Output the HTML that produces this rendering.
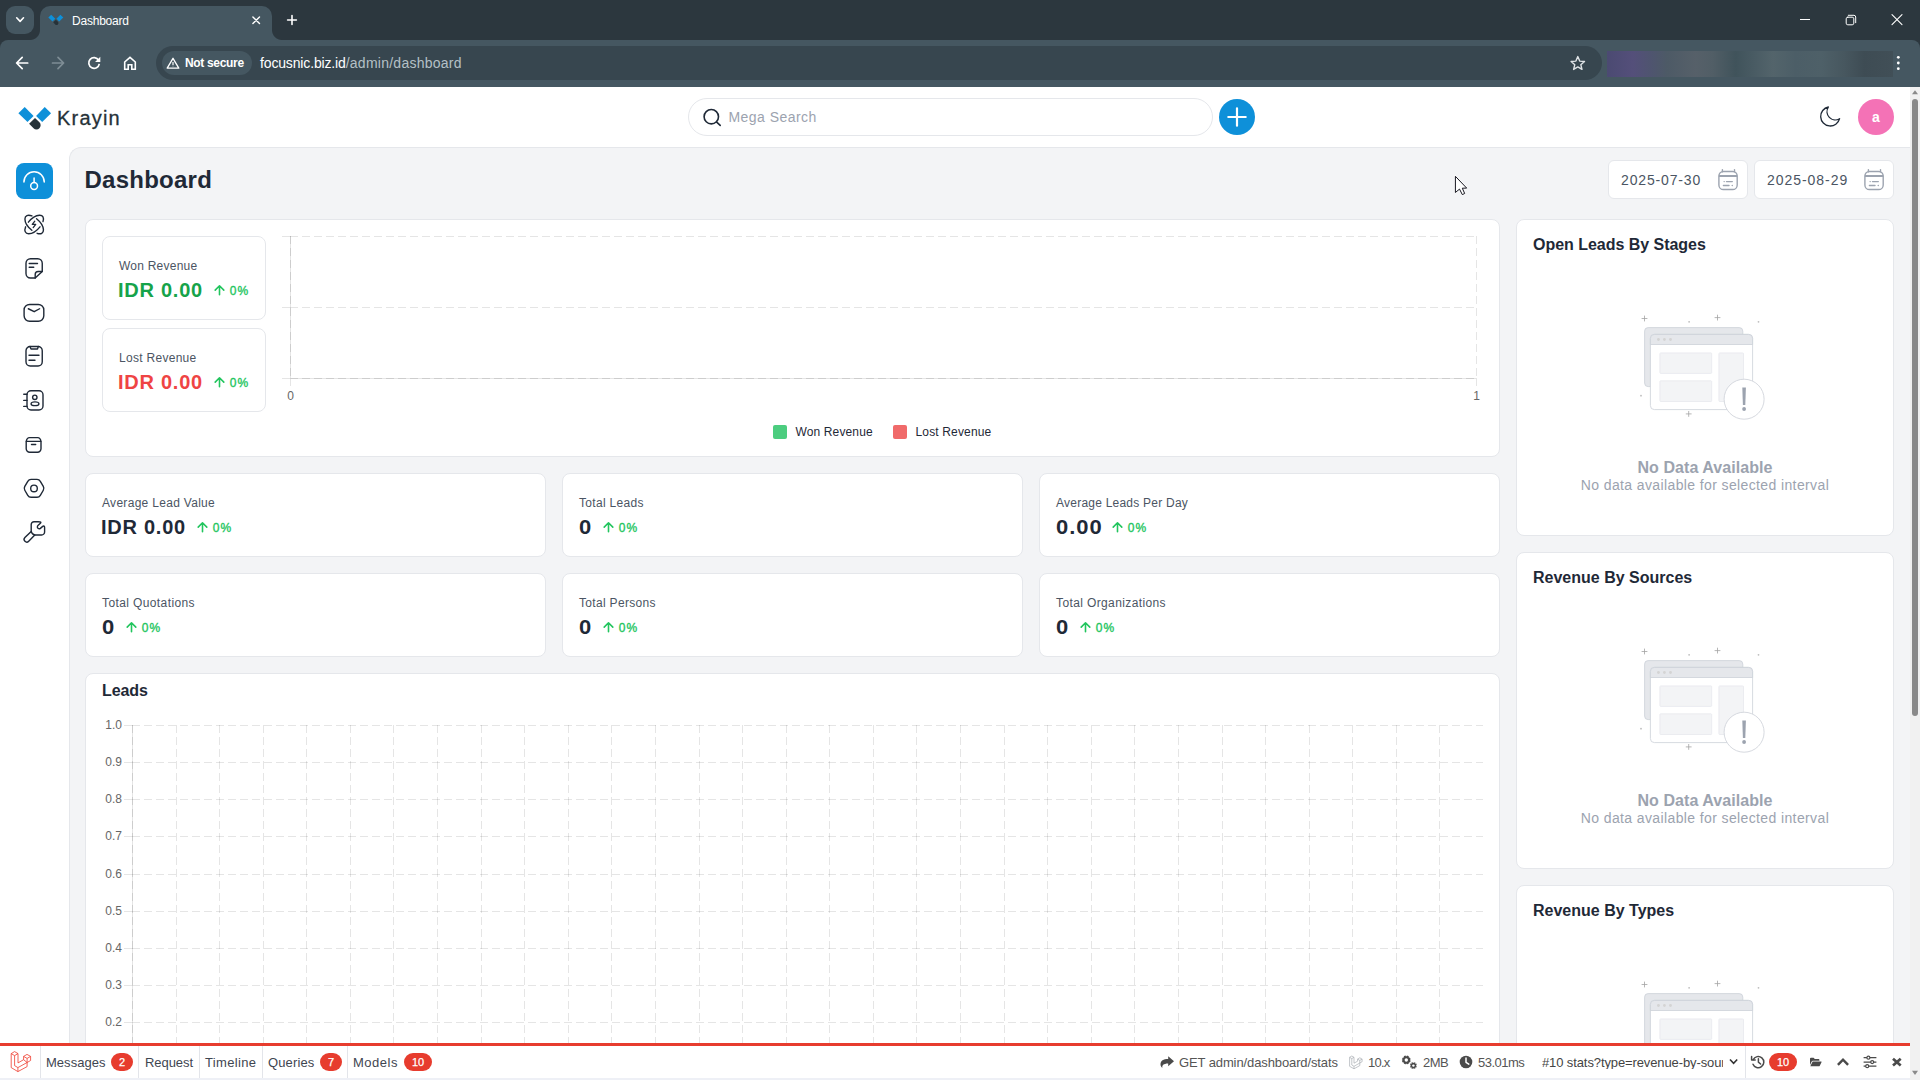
<!DOCTYPE html>
<html lang="en">
<head>
<meta charset="utf-8">
<title>Dashboard</title>
<style>
*{box-sizing:border-box;margin:0;padding:0}
html,body{width:1920px;height:1080px;overflow:hidden;background:#fff}
body{position:relative;font-family:"Liberation Sans",sans-serif;color:#1f2937}
.abs,.t{position:absolute}
.t{white-space:nowrap;line-height:1}
svg{position:absolute;overflow:visible}

/* ---------- browser chrome ---------- */
#tabstrip{position:absolute;left:0;top:0;width:1920px;height:52px;background:#2c373e}
#tabsearch{position:absolute;left:6px;top:6px;width:28px;height:28px;border-radius:9px;background:#455761}
#tab{position:absolute;left:40px;top:6px;width:232px;height:34px;border-radius:10px 10px 0 0;background:#455761}
#tab:before,#tab:after{content:"";position:absolute;bottom:0;width:10px;height:10px;background:radial-gradient(circle at 0 0,rgba(0,0,0,0) 9.5px,#455761 10.5px)}
#tab:before{left:-10px}
#tab:after{right:-10px;background:radial-gradient(circle at 100% 0,rgba(0,0,0,0) 9.5px,#455761 10.5px)}
#toolbar{position:absolute;left:0;top:40px;width:1920px;height:47px;background:#455761;border-radius:8px 8px 0 0}
#omnibox{position:absolute;left:156px;top:6px;width:1446px;height:34px;border-radius:17px;background:#37464f}
#chip{position:absolute;left:6px;top:5px;width:90px;height:24px;border-radius:12px;background:#455761}
#ext{position:absolute;left:1607px;top:11px;width:286px;height:26px;background:linear-gradient(90deg,#4b4a72 0,#544f7a 9%,#4f5470 15%,#4d5a66 21%,#566069 31%,#515e66 37%,#40535b 45%,#4a5c64 52%,#53646b 58%,#4c5e67 66%,#4e6068 75%,#47575f 83%,#3e4c54 90%,#414f57 100%)}

/* ---------- app ---------- */
#hdr{position:absolute;left:0;top:87px;width:1910px;height:60px;background:#fff}
#search{position:absolute;left:688px;top:11px;width:525px;height:38px;border:1px solid #e5e7eb;border-radius:19px;background:#fff}
#plus{position:absolute;left:1219px;top:12px;width:36px;height:36px;border-radius:50%;background:#0e90d9}
#avatar{position:absolute;left:1858px;top:12px;width:36px;height:36px;border-radius:50%;background:#f472b6}
#side{position:absolute;left:0;top:147px;width:69px;height:900px;background:#fff}
.nav{position:absolute;left:16px;width:37px;height:36px;border-radius:8px}
.nav.on{background:#0e90d9}
#main{position:absolute;left:69px;top:147px;width:1841px;height:900px;background:#f3f4f6;border:1px solid #e5e7eb;border-right:0;border-bottom:0;border-top-left-radius:12px;overflow:hidden}
/* children of #main are positioned in page coordinates via this wrapper */
#pg{position:absolute;left:-70px;top:-148px;width:1920px;height:1080px}
.card{position:absolute;background:#fff;border:1px solid #e5e7eb;border-radius:8px}
.lbl{font-size:12px;color:#4b5563;letter-spacing:.22px}
.val{font-size:20px;font-weight:700;color:#1f2937;letter-spacing:.75px}
.val.z{transform:scaleX(1.1);transform-origin:0 0;letter-spacing:.9px}
.pct{font-size:12px;font-weight:400;color:#22c55e;letter-spacing:1.1px;margin-left:.7px;-webkit-text-stroke:.35px #22c55e}
.h2{font-size:16px;font-weight:700;color:#1f2937}
.nd1{font-size:16px;font-weight:700;color:#9ca3af}
.nd2{font-size:14px;color:#9ca3af}
.ax{font-size:12px;color:#666}
.date{position:absolute;top:160px;width:140px;height:39px;background:#fff;border:1px solid #e5e7eb;border-radius:6px}

/* ---------- debugbar ---------- */
#dbg{position:absolute;left:0;top:1043px;width:1910px;height:37px;background:#fff;border-top:3px solid #e73c2e;border-bottom:2px solid #eef0f6;font-size:13px;color:#3f4651}
#dbg .sep{position:absolute;top:0;width:1px;height:32px;background:#e3e5ea}
.bdg{position:absolute;top:7px;height:18px;border-radius:9px;background:#e73c2e;color:#fff;font-size:11px;font-weight:400;-webkit-text-stroke:.25px #fff;line-height:18px;text-align:center}

/* ---------- scrollbar ---------- */
#sb{position:absolute;left:1910px;top:87px;width:10px;height:993px;background:#f1f1f1}
#sb i{position:absolute;left:2px;top:12px;width:6px;height:617px;border-radius:3px;background:#8a8a8a}
</style>
</head>
<body>

<!-- ================= BROWSER CHROME ================= -->
<div id="tabstrip">
  <div id="tabsearch"></div>
  <div id="tab"></div>
</div>
<div id="toolbar">
  <div id="omnibox"><div id="chip"></div></div>
  <div id="ext"></div>
</div>
<svg style="left:0;top:0" width="1920" height="87" viewBox="0 0 1920 87" fill="none" stroke="#fff" stroke-width="1.6" stroke-linecap="round" stroke-linejoin="round">
  <path d="M16.7 17.8L20.1 21.4L23.5 17.8"/>
  <g stroke="none"><path d="M51.2 14.7L48.3 17.6L52.5 21.6L55.3 18.8Z" fill="#0e90d9"/><path d="M60.4 14.7L63.3 17.6L59.2 21.6L56.4 18.8Z" fill="#0e90d9"/><path d="M55.9 19.7L53.2 22.3L55.2 24.4A1.9 1.9 0 0 0 57.9 21.7Z" fill="#263238"/></g>
  <path d="M252.9 16.9L259.5 23.5M259.5 16.9L252.9 23.5" stroke-width="1.4"/>
  <path d="M287.6 20H296.4M292 15.6V24.4"/>
  <path d="M1800 19.5H1810" stroke-width="1" stroke-linecap="butt"/>
  <rect x="1846.2" y="17.2" width="7.6" height="7.6" rx="1.6" stroke-width="1"/><path d="M1848.3 15.3H1854A1.8 1.8 0 0 1 1855.7 17V22.7" stroke-width="1"/>
  <path d="M1892 14.7L1902 24.7M1902 14.7L1892 24.7" stroke-width="1.1"/>
  <path d="M27.7 63H17M22.2 57.4L16.6 63L22.2 68.6" stroke-width="1.7"/>
  <path d="M52.5 63H63.2M58 57.4L63.6 63L58 68.6" stroke-width="1.7" stroke="#7e8d95"/>
  <path d="M98.6 60.2A5.3 5.3 0 1 0 99.3 63.8" stroke-width="1.7" stroke-linecap="butt"/><path d="M100.3 56.8V62H95.1Z" fill="#fff" stroke="none"/>
  <path d="M124.7 69.2V62L130 57.3L135.3 62V69.2H131.8V64.8H128.2V69.2Z" stroke-width="1.6" stroke-linejoin="miter"/>
  <path d="M173 58.3L167.2 68.2H178.8Z" stroke-width="1.3"/><path d="M173 62V65.2M173 66.8V66.9" stroke-width="1.2" stroke-linecap="butt"/>
  <path d="M1577.8 56.6L1579.7 61.1L1584.5 61.5L1580.8 64.7L1582 69.4L1577.8 66.9L1573.6 69.4L1574.8 64.7L1571.1 61.5L1575.9 61.1Z" stroke="#dfe3e6" stroke-width="1.4"/>
  <g fill="#fff" stroke="none"><circle cx="1898.3" cy="57.3" r="1.4"/><circle cx="1898.3" cy="63" r="1.4"/><circle cx="1898.3" cy="68.7" r="1.4"/></g>
</svg>
<span class="t" style="left:72px;top:15px;font-size:12px;color:#fff;letter-spacing:-.22px">Dashboard</span>
<span class="t" style="left:185px;top:57px;font-size:12px;font-weight:700;color:#fff;letter-spacing:-.33px">Not secure</span>
<span class="t" style="left:260px;top:56px;font-size:14px;color:#fff;letter-spacing:-.15px">focusnic.biz.id<span style="color:#b4c0c6;letter-spacing:.25px">/admin/dashboard</span></span>

<!-- ================= APP HEADER ================= -->
<div id="hdr">
  <div id="search"></div>
  <div id="plus"></div>
  <div id="avatar"></div>
  <svg style="left:0;top:0" width="130" height="60" viewBox="0 0 130 60"><path d="M24.7 20.1L18.4 26.3L27.5 35.1L33.6 29Z" fill="#0e90d9"/><path d="M44.7 20.1L51.1 26.3L42.2 35.1L36.1 29Z" fill="#0e90d9"/><path d="M35 30.9L29.1 36.7L33.55 41.15A4.1 4.1 0 0 0 39.45 35.35Z" fill="#263238"/></svg>
  <span class="t" style="left:57px;top:21px;font-size:20px;color:#263238;letter-spacing:1.2px;-webkit-text-stroke:.3px #263238">Krayin</span>
  <svg style="left:700px;top:18px" width="24" height="24" viewBox="700 18 24 24" fill="none" stroke="#1f2937" stroke-width="1.6" stroke-linecap="round"><circle cx="711.3" cy="29.7" r="7.2"/><path d="M716.7 35.1L720.2 38.4"/></svg>
  <span class="t" style="left:728.5px;top:23px;font-size:14px;color:#9ca3af;letter-spacing:.45px">Mega Search</span>
  <svg style="left:1219px;top:12px" width="36" height="36" viewBox="0 0 36 36" fill="none" stroke="#fff" stroke-width="2.2" stroke-linecap="round"><path d="M9.3 18H26.7M18 9.3V26.7"/></svg>
  <svg style="left:1817px;top:17px" width="26" height="26" viewBox="1817 104 26 26" fill="none" stroke="#1f2937" stroke-width="1.3" stroke-linejoin="round"><path d="M1828.4 107A9.6 9.6 0 1 0 1839.6 118.7A8.3 8.3 0 0 1 1828.4 107Z"/></svg>
  <span class="t" style="left:1858px;width:36px;text-align:center;top:23px;font-size:14px;font-weight:700;color:#fff">a</span>
</div>

<!-- ================= SIDEBAR ================= -->
<div id="side">
  <div class="nav on" style="top:16px"></div>
  <svg style="left:22px;top:22px" width="24" height="24" viewBox="0 0 24 24" fill="none" stroke="#fff" stroke-width="1.5" stroke-linecap="round"><path d="M1.95 13A10.15 10.15 0 0 1 22.25 13M12.1 9v4.6"/><circle cx="12.1" cy="17" r="3.4"/></svg>
<svg style="left:22px;top:66px" width="24" height="24" viewBox="0 0 24 24" fill="none" stroke="#1f2937" stroke-width="1.4" stroke-linecap="round" stroke-linejoin="round"><path d="M14.56 5.70A11.7 5.9 45 0 1 15.10 20.30M9.84 17.30A11.7 5.9 45 0 1 9.92 2.92M6.40 9.14A11.7 5.9 -45 0 1 21.00 8.60M18.00 13.86A11.7 5.9 -45 0 1 3.62 13.78"/><path d="M12.8 8.2L10.3 11.4H13.7L11.2 14.6" stroke-width="1.3"/></svg>
<svg style="left:22px;top:110px" width="24" height="24" viewBox="0 0 24 24" fill="none" stroke="#1f2937" stroke-width="1.4" stroke-linecap="round" stroke-linejoin="round"><path d="M8.5 1.75H15.75A4.5 4.5 0 0 1 20.25 6.25V14.5L13.2 21H8.5A4.5 4.5 0 0 1 4 16.5V6.25A4.5 4.5 0 0 1 8.5 1.75Z"/><path d="M20.2 14.5H16.2A3 3 0 0 0 13.2 17.5V21M7.2 6.5H15.5M7.2 10.3H11.75"/></svg>
<svg style="left:22px;top:154px" width="24" height="24" viewBox="0 0 24 24" fill="none" stroke="#1f2937" stroke-width="1.4" stroke-linecap="round" stroke-linejoin="round"><rect x="2.1" y="3.5" width="19.7" height="16.75" rx="5.5"/><path d="M6.3 7.75L12.2 10.7L17.6 7.75"/></svg>
<svg style="left:22px;top:198px" width="24" height="24" viewBox="0 0 24 24" fill="none" stroke="#1f2937" stroke-width="1.4" stroke-linecap="round" stroke-linejoin="round"><rect x="4" y="1.5" width="16.25" height="19.5" rx="4.2"/><path d="M8 1.5L9 4H15.5L16.3 1.5M7 10.25H17M7 15.25H13"/></svg>
<svg style="left:22px;top:242px" width="24" height="24" viewBox="0 0 24 24" fill="none" stroke="#1f2937" stroke-width="1.4" stroke-linecap="round" stroke-linejoin="round"><rect x="5" y="1.75" width="16" height="19.25" rx="4"/><path d="M1.75 5.3H5M1.75 11.4H5M1.75 17.4H5"/><circle cx="12.8" cy="8.3" r="2.2"/><ellipse cx="13" cy="14.75" rx="3.9" ry="1.9"/></svg>
<svg style="left:22px;top:286px" width="24" height="24" viewBox="0 0 24 24" fill="none" stroke="#1f2937" stroke-width="1.4" stroke-linecap="round" stroke-linejoin="round"><path d="M4.2 8.6C4.6 6 5.4 4.6 7.5 4.6H15.7C17.8 4.6 18.6 6 19 8.6V15.7A3.5 3.5 0 0 1 15.5 19.2H7.7A3.5 3.5 0 0 1 4.2 15.7Z"/><path d="M4.4 8.4H18.8M9.5 11.5H13.7"/></svg>
<svg style="left:22px;top:330px" width="24" height="24" viewBox="0 0 24 24" fill="none" stroke="#1f2937" stroke-width="1.4" stroke-linecap="round" stroke-linejoin="round"><path d="M21.30 9.44Q22.40 11.35 21.30 13.26L18.33 18.41Q17.23 20.31 15.03 20.31L9.08 20.31Q6.88 20.31 5.78 18.41L2.80 13.26Q1.70 11.35 2.80 9.44L5.77 4.29Q6.87 2.39 9.07 2.39L15.03 2.39Q17.23 2.39 18.33 4.29Z"/><circle cx="12" cy="11.4" r="3.3"/></svg>
<svg style="left:22px;top:374px" width="24" height="24" viewBox="0 0 24 24" fill="none" stroke="#1f2937" stroke-width="1.4" stroke-linecap="round" stroke-linejoin="round"><path d="M12 .7H16.4C18.6 .7 19.4 1.3 18.4 2.3L16.2 4.3C15 5.5 15.2 6.6 16 7.3C16.8 8 17.6 8 18.4 7.4L20.7 5.4C21.8 4.5 22.6 5.2 22.6 6.6V11A3 3 0 0 1 19.6 14H12.8C10.6 13.6 9.6 12.2 9.2 10.4V3.5A2.8 2.8 0 0 1 12 .7Z"/><path d="M9.2 10.4L2.9 16.6A2.6 2.6 0 0 0 6.7 20.3L12.8 14"/></svg>

</div>

<!-- ================= MAIN CONTENT ================= -->
<div id="main"><div id="pg">
<h1 class="t" style="left:84.5px;top:168px;font-size:24px;font-weight:700;color:#1f2937;letter-spacing:.25px">Dashboard</h1>

<!-- date range -->
<div class="date" style="left:1608px"><span class="t" style="left:12px;top:12px;font-size:14px;color:#4b5563;letter-spacing:.85px">2025-07-30</span>
  <svg style="left:108px;top:8px" width="22" height="22" viewBox="0 0 22 22" fill="none" stroke="#9ca3af" stroke-width="1.4" stroke-linecap="round"><rect x="1.9" y="2.5" width="18.3" height="18" rx="4.6"/><path d="M5.4 .6v2.2M17.5 .6v2.2"/><path d="M1.9 6.9h18.3" stroke-width="2" stroke-linecap="butt"/><path d="M7.1 12.6h.1M9.5 12.6h5.8M6.4 16.5h5.6M15.2 16.5h.1"/></svg></div>
<div class="date" style="left:1754px"><span class="t" style="left:12px;top:12px;font-size:14px;color:#4b5563;letter-spacing:.95px">2025-08-29</span>
  <svg style="left:108px;top:8px" width="22" height="22" viewBox="0 0 22 22" fill="none" stroke="#9ca3af" stroke-width="1.4" stroke-linecap="round"><rect x="1.9" y="2.5" width="18.3" height="18" rx="4.6"/><path d="M5.4 .6v2.2M17.5 .6v2.2"/><path d="M1.9 6.9h18.3" stroke-width="2" stroke-linecap="butt"/><path d="M7.1 12.6h.1M9.5 12.6h5.8M6.4 16.5h5.6M15.2 16.5h.1"/></svg></div>

<!-- revenue card -->
<section class="card" style="left:85px;top:219px;width:1415px;height:238px">
  <div class="card" style="left:16px;top:16px;width:164px;height:84px">
    <span class="t lbl" style="left:16px;top:23px;letter-spacing:.23px">Won Revenue</span>
    <span class="t val" style="left:15px;top:43px;color:#16a34a">IDR 0.00</span>
    <svg style="left:110px;top:47px" width="13" height="13" viewBox="0 0 13 13" fill="none" stroke="#22c55e" stroke-width="1.6" stroke-linecap="round" stroke-linejoin="round"><path d="M6.5 10.7V1.8M2.2 6.1l4.3-4.3 4.3 4.3"/></svg>
    <span class="t pct" style="left:126px;top:48px">0%</span>
  </div>
  <div class="card" style="left:16px;top:108px;width:164px;height:84px">
    <span class="t lbl" style="left:16px;top:23px;letter-spacing:.29px">Lost Revenue</span>
    <span class="t val" style="left:15px;top:43px;color:#ef4444">IDR 0.00</span>
    <svg style="left:110px;top:47px" width="13" height="13" viewBox="0 0 13 13" fill="none" stroke="#22c55e" stroke-width="1.6" stroke-linecap="round" stroke-linejoin="round"><path d="M6.5 10.7V1.8M2.2 6.1l4.3-4.3 4.3 4.3"/></svg>
    <span class="t pct" style="left:126px;top:48px">0%</span>
  </div>
  <!-- bar chart (empty) -->
  <svg style="left:-1px;top:-1px" width="1415" height="238" viewBox="85 219 1415 238" shape-rendering="crispEdges" fill="none">
    <g stroke="rgba(0,0,0,.1)" stroke-width="1">
      <path d="M290.5 236v150M1476.5 378v8M282 378.5h1195"/>
      <path d="M282 236.5h8M282 307.5h8"/>
    </g>
    <g stroke="rgba(0,0,0,.1)" stroke-width="1" stroke-dasharray="8 4">
      <path d="M290 236.5h1187M290 307.5h1187M290 378.5h1187"/>
      <path d="M290.5 236v142M1476.5 236v142"/>
    </g>
    <g font-family="Liberation Sans, sans-serif" font-size="12" fill="#666" text-anchor="middle" stroke="none" shape-rendering="auto"><text x="290.5" y="400">0</text><text x="1476.5" y="400">1</text></g>
  </svg>
  <i class="abs" style="left:687px;top:205px;width:14px;height:14px;border-radius:2px;background:#4ccd7f"></i>
  <span class="t" style="left:709.5px;top:206px;font-size:12px;color:#1f2937;letter-spacing:.13px">Won Revenue</span>
  <i class="abs" style="left:807px;top:205px;width:14px;height:14px;border-radius:2px;background:#f06a6a"></i>
  <span class="t" style="left:829.5px;top:206px;font-size:12px;color:#1f2937;letter-spacing:.15px">Lost Revenue</span>
</section>

<!-- stat cards -->
<section class="card" style="left:85px;top:473px;width:461px;height:84px">
  <span class="t lbl" style="left:16px;top:23px;letter-spacing:.3px">Average Lead Value</span>
  <span class="t val" style="left:15px;top:43px">IDR 0.00</span>
  <svg style="left:110px;top:47px" width="13" height="13" viewBox="0 0 13 13" fill="none" stroke="#22c55e" stroke-width="1.6" stroke-linecap="round" stroke-linejoin="round"><path d="M6.5 10.7V1.8M2.2 6.1l4.3-4.3 4.3 4.3"/></svg>
  <span class="t pct" style="left:126px;top:48px">0%</span>
</section>
<section class="card" style="left:562px;top:473px;width:461px;height:84px">
  <span class="t lbl" style="left:16px;top:23px;letter-spacing:.31px">Total Leads</span>
  <span class="t val z" style="left:15.5px;top:43px">0</span>
  <svg style="left:39px;top:47px" width="13" height="13" viewBox="0 0 13 13" fill="none" stroke="#22c55e" stroke-width="1.6" stroke-linecap="round" stroke-linejoin="round"><path d="M6.5 10.7V1.8M2.2 6.1l4.3-4.3 4.3 4.3"/></svg>
  <span class="t pct" style="left:55px;top:48px">0%</span>
</section>
<section class="card" style="left:1039px;top:473px;width:461px;height:84px">
  <span class="t lbl" style="left:16px;top:23px;letter-spacing:.23px">Average Leads Per Day</span>
  <span class="t val z" style="left:15.5px;top:43px">0.00</span>
  <svg style="left:71px;top:47px" width="13" height="13" viewBox="0 0 13 13" fill="none" stroke="#22c55e" stroke-width="1.6" stroke-linecap="round" stroke-linejoin="round"><path d="M6.5 10.7V1.8M2.2 6.1l4.3-4.3 4.3 4.3"/></svg>
  <span class="t pct" style="left:87px;top:48px">0%</span>
</section>
<section class="card" style="left:85px;top:573px;width:461px;height:84px">
  <span class="t lbl" style="left:16px;top:23px;letter-spacing:.39px">Total Quotations</span>
  <span class="t val z" style="left:15.5px;top:43px">0</span>
  <svg style="left:39px;top:47px" width="13" height="13" viewBox="0 0 13 13" fill="none" stroke="#22c55e" stroke-width="1.6" stroke-linecap="round" stroke-linejoin="round"><path d="M6.5 10.7V1.8M2.2 6.1l4.3-4.3 4.3 4.3"/></svg>
  <span class="t pct" style="left:55px;top:48px">0%</span>
</section>
<section class="card" style="left:562px;top:573px;width:461px;height:84px">
  <span class="t lbl" style="left:16px;top:23px;letter-spacing:.32px">Total Persons</span>
  <span class="t val z" style="left:15.5px;top:43px">0</span>
  <svg style="left:39px;top:47px" width="13" height="13" viewBox="0 0 13 13" fill="none" stroke="#22c55e" stroke-width="1.6" stroke-linecap="round" stroke-linejoin="round"><path d="M6.5 10.7V1.8M2.2 6.1l4.3-4.3 4.3 4.3"/></svg>
  <span class="t pct" style="left:55px;top:48px">0%</span>
</section>
<section class="card" style="left:1039px;top:573px;width:461px;height:84px">
  <span class="t lbl" style="left:16px;top:23px;letter-spacing:.38px">Total Organizations</span>
  <span class="t val z" style="left:15.5px;top:43px">0</span>
  <svg style="left:39px;top:47px" width="13" height="13" viewBox="0 0 13 13" fill="none" stroke="#22c55e" stroke-width="1.6" stroke-linecap="round" stroke-linejoin="round"><path d="M6.5 10.7V1.8M2.2 6.1l4.3-4.3 4.3 4.3"/></svg>
  <span class="t pct" style="left:55px;top:48px">0%</span>
</section>
<section class="card" style="left:85px;top:673px;width:1415px;height:460px">
  <h2 class="t h2" style="left:16px;top:9px;letter-spacing:-.1px">Leads</h2>
  <svg style="left:-1px;top:-1px" width="1415" height="460" viewBox="85 673 1415 460" shape-rendering="crispEdges" fill="none">
    <g stroke="rgba(0,0,0,.1)" stroke-width="1"><path d="M132.5 725v380"/><path d="M124 725.5h8M124 762.5h8M124 799.5h8M124 836.5h8M124 874.5h8M124 911.5h8M124 948.5h8M124 985.5h8M124 1022.5h8M124 1060.5h8M124 1097.5h8"/></g>
    <g stroke="rgba(0,0,0,.1)" stroke-width="1" stroke-dasharray="8 4"><path d="M132 725.5h1351M132 762.5h1351M132 799.5h1351M132 836.5h1351M132 874.5h1351M132 911.5h1351M132 948.5h1351M132 985.5h1351M132 1022.5h1351M132 1060.5h1351M132 1097.5h1351"/><path d="M132.5 725v380M176.5 725v380M219.5 725v380M263.5 725v380M306.5 725v380M350.5 725v380M393.5 725v380M437.5 725v380M481.5 725v380M524.5 725v380M568.5 725v380M611.5 725v380M655.5 725v380M699.5 725v380M742.5 725v380M786.5 725v380M829.5 725v380M873.5 725v380M916.5 725v380M960.5 725v380M1004.5 725v380M1047.5 725v380M1091.5 725v380M1134.5 725v380M1178.5 725v380M1222.5 725v380M1265.5 725v380M1309.5 725v380M1352.5 725v380M1396.5 725v380M1439.5 725v380"/></g>
    <g font-family="Liberation Sans, sans-serif" font-size="12" fill="#666" text-anchor="end" stroke="none" shape-rendering="auto"><text x="122" y="729.1">1.0</text><text x="122" y="766.1">0.9</text><text x="122" y="803.1">0.8</text><text x="122" y="840.1">0.7</text><text x="122" y="878.1">0.6</text><text x="122" y="915.1">0.5</text><text x="122" y="952.1">0.4</text><text x="122" y="989.1">0.3</text><text x="122" y="1026.1">0.2</text><text x="122" y="1064.1">0.1</text><text x="122" y="1101.1">0.0</text></g>
  </svg>
</section>

<section class="card" style="left:1516px;top:219px;width:378px;height:317px">
  <h2 class="t h2" style="left:16px;top:17px;letter-spacing:-0.03px">Open Leads By Stages</h2>
  <svg style="left:119px;top:92px" width="130" height="110" viewBox="0 0 130 110">
  <g fill="none" stroke="#a3a3a3" stroke-width=".8"><path d="M8.5 3.6v5.8M5.6 6.5h5.8M81.5 2.7v5.8M78.6 5.6h5.8M52.7 99v5.8M49.8 101.9h5.8"/></g>
  <g fill="#bdbdbd"><circle cx="53.1" cy="9.8" r=".9"/><circle cx="122.5" cy="9.8" r=".9"/><circle cx="5" cy="83.7" r=".9"/></g>
  <rect x="8.6" y="15.6" width="98.2" height="59" rx="3.5" fill="#e5e7eb" stroke="#cbd0d8" stroke-width=".8"/>
  <rect x="14.4" y="22.4" width="102.2" height="75.2" rx="4" fill="#fff" stroke="#cbd0d8" stroke-width=".8"/>
  <path d="M14.4 32.5v-6.1a4 4 0 0 1 4-4h94.2a4 4 0 0 1 4 4v6.1z" fill="#e5e7eb" stroke="#cbd0d8" stroke-width=".8"/>
  <g fill="#d4d4d4"><circle cx="22.45" cy="27.5" r="1.4"/><circle cx="28.4" cy="27.5" r="1.4"/><circle cx="34.5" cy="27.5" r="1.4"/></g>
  <g fill="#f3f4f6" stroke="#e7e9ee" stroke-width=".8"><rect x="23.9" y="40.9" width="51.8" height="20.5" rx=".8"/><rect x="23.9" y="68.8" width="51.8" height="20.7" rx=".8"/><rect x="82.9" y="40.9" width="24.6" height="48.6" rx=".8"/></g>
  <circle cx="108.1" cy="87.2" r="20" fill="#fff" stroke="#d1d5db" stroke-width=".9"/>
  <path d="M106.3 75.4h3.6l-.6 17.6h-2.4z" fill="#9ca3af"/><circle cx="108.1" cy="97" r="1.9" fill="#9ca3af"/>
  </svg>
  <p class="t nd1" style="left:0;width:376px;text-align:center;top:240px;letter-spacing:.06px">No Data Available</p>
  <p class="t nd2" style="left:0;width:376px;text-align:center;top:258px;letter-spacing:.38px">No data available for selected interval</p>
</section>
<section class="card" style="left:1516px;top:552px;width:378px;height:317px">
  <h2 class="t h2" style="left:16px;top:17px;letter-spacing:0px">Revenue By Sources</h2>
  <svg style="left:119px;top:92px" width="130" height="110" viewBox="0 0 130 110">
  <g fill="none" stroke="#a3a3a3" stroke-width=".8"><path d="M8.5 3.6v5.8M5.6 6.5h5.8M81.5 2.7v5.8M78.6 5.6h5.8M52.7 99v5.8M49.8 101.9h5.8"/></g>
  <g fill="#bdbdbd"><circle cx="53.1" cy="9.8" r=".9"/><circle cx="122.5" cy="9.8" r=".9"/><circle cx="5" cy="83.7" r=".9"/></g>
  <rect x="8.6" y="15.6" width="98.2" height="59" rx="3.5" fill="#e5e7eb" stroke="#cbd0d8" stroke-width=".8"/>
  <rect x="14.4" y="22.4" width="102.2" height="75.2" rx="4" fill="#fff" stroke="#cbd0d8" stroke-width=".8"/>
  <path d="M14.4 32.5v-6.1a4 4 0 0 1 4-4h94.2a4 4 0 0 1 4 4v6.1z" fill="#e5e7eb" stroke="#cbd0d8" stroke-width=".8"/>
  <g fill="#d4d4d4"><circle cx="22.45" cy="27.5" r="1.4"/><circle cx="28.4" cy="27.5" r="1.4"/><circle cx="34.5" cy="27.5" r="1.4"/></g>
  <g fill="#f3f4f6" stroke="#e7e9ee" stroke-width=".8"><rect x="23.9" y="40.9" width="51.8" height="20.5" rx=".8"/><rect x="23.9" y="68.8" width="51.8" height="20.7" rx=".8"/><rect x="82.9" y="40.9" width="24.6" height="48.6" rx=".8"/></g>
  <circle cx="108.1" cy="87.2" r="20" fill="#fff" stroke="#d1d5db" stroke-width=".9"/>
  <path d="M106.3 75.4h3.6l-.6 17.6h-2.4z" fill="#9ca3af"/><circle cx="108.1" cy="97" r="1.9" fill="#9ca3af"/>
  </svg>
  <p class="t nd1" style="left:0;width:376px;text-align:center;top:240px;letter-spacing:.06px">No Data Available</p>
  <p class="t nd2" style="left:0;width:376px;text-align:center;top:258px;letter-spacing:.38px">No data available for selected interval</p>
</section>
<section class="card" style="left:1516px;top:885px;width:378px;height:317px">
  <h2 class="t h2" style="left:16px;top:17px;letter-spacing:0px">Revenue By Types</h2>
  <svg style="left:119px;top:92px" width="130" height="110" viewBox="0 0 130 110">
  <g fill="none" stroke="#a3a3a3" stroke-width=".8"><path d="M8.5 3.6v5.8M5.6 6.5h5.8M81.5 2.7v5.8M78.6 5.6h5.8M52.7 99v5.8M49.8 101.9h5.8"/></g>
  <g fill="#bdbdbd"><circle cx="53.1" cy="9.8" r=".9"/><circle cx="122.5" cy="9.8" r=".9"/><circle cx="5" cy="83.7" r=".9"/></g>
  <rect x="8.6" y="15.6" width="98.2" height="59" rx="3.5" fill="#e5e7eb" stroke="#cbd0d8" stroke-width=".8"/>
  <rect x="14.4" y="22.4" width="102.2" height="75.2" rx="4" fill="#fff" stroke="#cbd0d8" stroke-width=".8"/>
  <path d="M14.4 32.5v-6.1a4 4 0 0 1 4-4h94.2a4 4 0 0 1 4 4v6.1z" fill="#e5e7eb" stroke="#cbd0d8" stroke-width=".8"/>
  <g fill="#d4d4d4"><circle cx="22.45" cy="27.5" r="1.4"/><circle cx="28.4" cy="27.5" r="1.4"/><circle cx="34.5" cy="27.5" r="1.4"/></g>
  <g fill="#f3f4f6" stroke="#e7e9ee" stroke-width=".8"><rect x="23.9" y="40.9" width="51.8" height="20.5" rx=".8"/><rect x="23.9" y="68.8" width="51.8" height="20.7" rx=".8"/><rect x="82.9" y="40.9" width="24.6" height="48.6" rx=".8"/></g>
  <circle cx="108.1" cy="87.2" r="20" fill="#fff" stroke="#d1d5db" stroke-width=".9"/>
  <path d="M106.3 75.4h3.6l-.6 17.6h-2.4z" fill="#9ca3af"/><circle cx="108.1" cy="97" r="1.9" fill="#9ca3af"/>
  </svg>
  <p class="t nd1" style="left:0;width:376px;text-align:center;top:240px;letter-spacing:.06px">No Data Available</p>
  <p class="t nd2" style="left:0;width:376px;text-align:center;top:258px;letter-spacing:.38px">No data available for selected interval</p>
</section>


</div></div>

<!-- ================= SCROLLBAR ================= -->
<div id="sb"><i></i></div>

<!-- ================= DEBUGBAR ================= -->
<div id="dbg">
<svg style="left:10px;top:4px" width="22" height="22" viewBox="0 0 22 22" fill="none" stroke="#ef3b2d" stroke-width=".8" stroke-linejoin="round"><path d="M1.2 3.6L4.6 1.6L8 3.6V12.9L13.6 9.7V6.4L17 4.4L20.6 6.4V10.5L17.1 12.5V16.6L7.9 21.6L1.2 17.6Z"/><path d="M1.2 3.6L4.6 5.6L8 3.6M4.6 5.6V15.6L7.9 17.6V21.6M7.9 17.6L17.1 12.5M13.6 6.4L17.1 8.4L20.6 6.4M17.1 8.4V12.5M13.6 9.7L17.1 12.5"/></svg>
<i class="sep" style="left:40px"></i><i class="sep" style="left:138px"></i><i class="sep" style="left:199px"></i><i class="sep" style="left:262px"></i><i class="sep" style="left:347px"></i>
<span class="t" style="left:46px;top:10px;font-size:13px;letter-spacing:0.03px;color:#3f4651">Messages</span>
<b class="bdg" style="left:111px;width:22px">2</b>
<span class="t" style="left:145px;top:10px;font-size:13px;letter-spacing:-0.06px;color:#3f4651">Request</span>
<span class="t" style="left:205px;top:10px;font-size:13px;letter-spacing:0.34px;color:#3f4651">Timeline</span>
<span class="t" style="left:268px;top:10px;font-size:13px;letter-spacing:0.12px;color:#3f4651">Queries</span>
<b class="bdg" style="left:320px;width:22px">7</b>
<span class="t" style="left:353px;top:10px;font-size:13px;letter-spacing:0.5px;color:#3f4651">Models</span>
<b class="bdg" style="left:404px;width:28px">10</b>
<svg style="left:1150px;top:0" width="760" height="32" viewBox="1150 1046 760 32" fill="#4a4a4a" stroke="none">
  <path d="M1174 1061.2L1168.2 1056.3V1059.1C1163.4 1059.2 1160.5 1060.8 1160.5 1064.6C1160.5 1066.1 1161.4 1067.4 1162.4 1068C1161.9 1065.4 1163.2 1063.6 1168.2 1063.5V1066.2Z"/>
  <g fill="none" stroke="#a9adb3" stroke-width=".7" stroke-linejoin="round"><path d="M1349.6 1057.3L1351.8 1056L1354 1057.3V1063.2L1357.6 1061.2V1059.1L1359.8 1057.8L1362.1 1059.1V1061.7L1359.8 1063V1065.6L1354 1068.8L1349.6 1066.3Z"/><path d="M1349.6 1057.3L1351.8 1058.6L1354 1057.3M1351.8 1058.6V1065L1354 1066.3V1068.8M1354 1066.3L1359.8 1063M1357.6 1059.1L1359.8 1060.4L1362.1 1059.1M1359.8 1060.4V1063"/></g>
  <g><circle cx="1406.3" cy="1060" r="4.4"/><circle cx="1413.4" cy="1065.6" r="3.3"/></g>
  <g fill="#fff"><circle cx="1406.3" cy="1060" r="1.7"/><circle cx="1413.4" cy="1065.6" r="1.2"/></g>
  <g stroke="#fff" stroke-width="1.1" fill="none"><path d="M1406.3 1055V1056.2M1406.3 1063.8V1065M1401.3 1060H1402.5M1410.1 1060H1411.3M1402.8 1056.5L1403.6 1057.3M1409 1062.7L1409.8 1063.5M1409.8 1056.5L1409 1057.3M1403.6 1062.7L1402.8 1063.5"/><path d="M1413.4 1061.9V1062.8M1413.4 1068.4V1069.3M1409.7 1065.6H1410.6M1416.2 1065.6H1417.1M1410.8 1063L1411.4 1063.6M1415.4 1067.6L1416 1068.2M1416 1063L1415.4 1063.6M1411.4 1067.6L1410.8 1068.2" stroke-width=".9"/></g>
  <circle cx="1466" cy="1062" r="6.3"/><path d="M1466 1058V1062.3L1468.8 1064.2" fill="none" stroke="#fff" stroke-width="1.5" stroke-linecap="round" stroke-linejoin="round"/>
  <path d="M1730 1059.5L1733.6 1063.3L1737.2 1059.5" fill="none" stroke="#333" stroke-width="1.6"/>
  <g fill="none" stroke="#4a4a4a" stroke-width="1.5" stroke-linecap="round" stroke-linejoin="round"><path d="M1753.2 1059.6A5.6 5.6 0 1 1 1753 1064.2"/><path d="M1751.6 1056.4V1060H1755.2"/><path d="M1758.4 1058.8V1062.2L1760.6 1064"/></g>
  <path d="M1810 1058.6C1810 1058 1810.4 1057.7 1811 1057.7H1813.6L1814.8 1058.9H1818.4C1819 1058.9 1819.4 1059.3 1819.4 1059.9V1060.7H1812.9C1812.3 1060.7 1811.9 1061 1811.7 1061.5L1810 1065Z"/><path d="M1812.4 1061.9C1812.5 1061.6 1812.8 1061.5 1813.1 1061.5H1821C1821.5 1061.5 1821.7 1061.9 1821.5 1062.3L1819.8 1065.7C1819.6 1066.1 1819.3 1066.3 1818.9 1066.3H1810.3Z"/>
  <path d="M1837.9 1064.8L1843 1059.7L1848.1 1064.8" fill="none" stroke="#4a4a4a" stroke-width="2.5"/>
  <g fill="none" stroke="#4a4a4a" stroke-width="1.2"><path d="M1863.6 1057.7H1876.4M1863.6 1062.1H1876.4M1863.6 1066.2H1876.4"/><g fill="#fff"><circle cx="1868.4" cy="1057.7" r="1.5"/><circle cx="1872.2" cy="1062.1" r="1.5"/><circle cx="1867.2" cy="1066.2" r="1.5"/></g></g>
  <path d="M1893 1058.7L1900.7 1065.4M1900.7 1058.7L1893 1065.4" fill="none" stroke="#4a4a4a" stroke-width="2.7"/>
</svg>
<span class="t" style="left:1179px;top:10px;font-size:13px;letter-spacing:-0.11px;color:#555">GET admin/dashboard/stats</span>
<span class="t" style="left:1368px;top:10px;font-size:13px;letter-spacing:-0.77px;color:#555">10.x</span>
<span class="t" style="left:1423px;top:10px;font-size:13px;letter-spacing:-0.58px;color:#555">2MB</span>
<span class="t" style="left:1478px;top:10px;font-size:13px;letter-spacing:-0.5px;color:#555">53.01ms</span>
<span class="t" style="left:1542px;top:10px;width:181px;overflow:hidden;font-size:13px;letter-spacing:-.11px;color:#444">#10 stats?type=revenue-by-sources</span>
<i class="sep" style="left:1745px"></i>
<b class="bdg" style="left:1769px;width:28px">10</b>

</div>

<svg style="left:1454px;top:175px" width="16" height="24" viewBox="0 0 16 24"><path d="M1.4 1.3V17.5L5.5 14.1L8.3 19.6L10.7 18.5L8.3 13.2L12.7 13.1Z" fill="#fff" stroke="#fff" stroke-width="2.2" stroke-linejoin="round" opacity=".7"/><path d="M1.4 1.3V17.5L5.5 14.1L8.3 19.6L10.7 18.5L8.3 13.2L12.7 13.1Z" fill="#fff" stroke="#15151f" stroke-width="1" stroke-linejoin="round"/></svg>
<svg style="left:1910px;top:87px" width="10" height="993" viewBox="0 0 10 993" fill="#8a8a8a"><path d="M5 3.2L8 7.3H2Z"/><path d="M2 983.8H8L5 988Z"/></svg>
</body>
</html>
